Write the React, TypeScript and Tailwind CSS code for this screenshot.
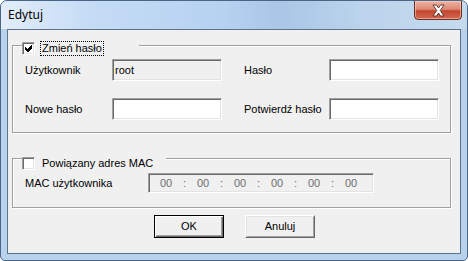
import { FC, ReactNode } from 'react';

const sunken =
  'border border-t-[#a0a0a0] border-l-[#a0a0a0] border-r-white border-b-white shadow-[inset_1px_1px_0_#696969,inset_-1px_-1px_0_#e3e3e3]';

const Checkbox: FC<{ checked?: boolean }> = ({ checked }) => (
  <div className={`w-[13px] h-[13px] shrink-0 bg-white ${sunken} flex items-center justify-center`}>
    {checked && (
      <svg width="7" height="7" viewBox="0 0 7 7" shapeRendering="crispEdges">
        <path d="M0 2 L2 4 L6 0 L7 0 L7 3 L3 7 L2 7 L0 5 Z" fill="#000" />
      </svg>
    )}
  </div>
);

const Field: FC<{ value?: string; disabled?: boolean }> = ({ value, disabled }) => (
  <div
    className={`w-[110px] h-[22px] ${sunken} ${disabled ? 'bg-[#f0f0f0]' : 'bg-white'} flex items-center pl-[2px] text-black`}
  >
    {value}
  </div>
);

const GroupHeader: FC<{ checked?: boolean; width: string; focused?: boolean; children: ReactNode }> = ({
  checked,
  width,
  focused,
  children
}) => (
  <div className={`flex items-center h-[13px] ml-[9px] bg-[#f0f0f0] ${width}`}>
    <Checkbox checked={checked} />
    <span
      className={`ml-[5px] h-[15px] px-[1px] flex items-center leading-none ${
        focused ? 'border border-dotted border-black' : 'border border-transparent'
      }`}
    >
      {children}
    </span>
  </div>
);

const Button: FC<{ primary?: boolean; children: ReactNode }> = ({ primary, children }) => (
  <button
    className={`w-[70px] h-[23px] bg-[#f0f0f0] flex items-center justify-center text-black ${
      primary
        ? 'border border-black shadow-[inset_1px_1px_0_#fff,inset_-1px_-1px_0_#696969,inset_-2px_-2px_0_#a0a0a0]'
        : 'border border-t-white border-l-white border-r-[#696969] border-b-[#696969] shadow-[inset_1px_1px_0_#e3e3e3,inset_-1px_-1px_0_#a0a0a0]'
    }`}
  >
    {children}
  </button>
);

const MacField: FC = () => (
  <div className={`w-[226px] h-[20px] ${sunken} bg-[#f0f0f0] flex items-center pl-[4px] text-[#6d6d6d]`}>
    {[0, 1, 2, 3, 4, 5].map((i) => (
      <div key={i} className="flex items-center">
        {i > 0 && <span className="w-[11px] text-center">:</span>}
        <span className="w-[26px] text-center">00</span>
      </div>
    ))}
  </div>
);

export default function App() {
  return (
    <div className="w-[468px] h-[261px] flex flex-col border border-[#4a6585] rounded-t-[7px] rounded-b-[5px] bg-[#b9d2ec] overflow-hidden font-['Liberation_Sans',Arial,sans-serif] text-[11px] text-black">
      {/* title bar */}
      <div className="h-[28px] flex items-start justify-between bg-[linear-gradient(90deg,#e2edf9_0%,#c4dbf5_20%,#b6d2f1_48%,#a9c6e6_60%,#bcd4ec_78%,#c6daee_100%)]">
        <span className="ml-[7px] mt-[6px] text-[12px] font-['Noto_Sans',sans-serif] leading-[16px] text-black">
          Edytuj
        </span>
        <div className="mr-[5px] -mt-[1px] w-[48px] h-[20px] rounded-b-[4px] border border-[#6e2e22] bg-[linear-gradient(180deg,#eab3a4_0%,#dd8b76_45%,#c4452e_55%,#cf6a50_100%)] flex items-center justify-center shadow-[inset_0_0_0_1px_rgba(255,220,210,0.5)]">
          <svg width="15" height="13" viewBox="0 0 15 13">
            <path
              d="M2 1 L5.5 1 L7.5 4 L9.5 1 L13 1 L9.3 6.5 L13 12 L9.5 12 L7.5 9 L5.5 12 L2 12 L5.7 6.5 Z"
              fill="#fff"
              stroke="#5a2a22"
              strokeWidth="0.9"
              strokeLinejoin="round"
            />
          </svg>
        </div>
      </div>

      {/* client */}
      <div className="mx-[6px] h-[225px] border border-[#5e738b] bg-[#f0f0f0]">
        {/* group 1 */}
        <div className="mt-[15px] ml-[4px] w-[439px] h-[88px] border border-[#a0a0a0] shadow-[inset_1px_1px_0_#fff,1px_1px_0_#fff]">
          <div className="-mt-[4px]">
            <GroupHeader checked focused width="w-[117px]">
              Zmień hasło
            </GroupHeader>
          </div>
          <div className="mt-[4px] pl-[12px] flex flex-col gap-[17px]">
            <div className="flex items-center">
              <span className="w-[87px]">Użytkownik</span>
              <Field value="root" disabled />
              <span className="ml-[22px] w-[85px]">Hasło</span>
              <Field />
            </div>
            <div className="flex items-center">
              <span className="w-[87px]">Nowe hasło</span>
              <Field />
              <span className="ml-[22px] w-[85px]">Potwierdź hasło</span>
              <Field />
            </div>
          </div>
        </div>

        {/* group 2 */}
        <div className="mt-[25px] ml-[4px] w-[439px] h-[50px] border border-[#a0a0a0] shadow-[inset_1px_1px_0_#fff,1px_1px_0_#fff]">
          <div className="-mt-[2px]">
            <GroupHeader width="w-[144px]">Powiązany adres MAC</GroupHeader>
          </div>
          <div className="mt-[3px] pl-[12px] flex items-center">
            <span className="w-[123px]">MAC użytkownika</span>
            <MacField />
          </div>
        </div>

        {/* buttons */}
        <div className="mt-[7px] flex gap-[21px] pl-[146px]">
          <Button primary>OK</Button>
          <Button>Anuluj</Button>
        </div>
      </div>
    </div>
  );
}
